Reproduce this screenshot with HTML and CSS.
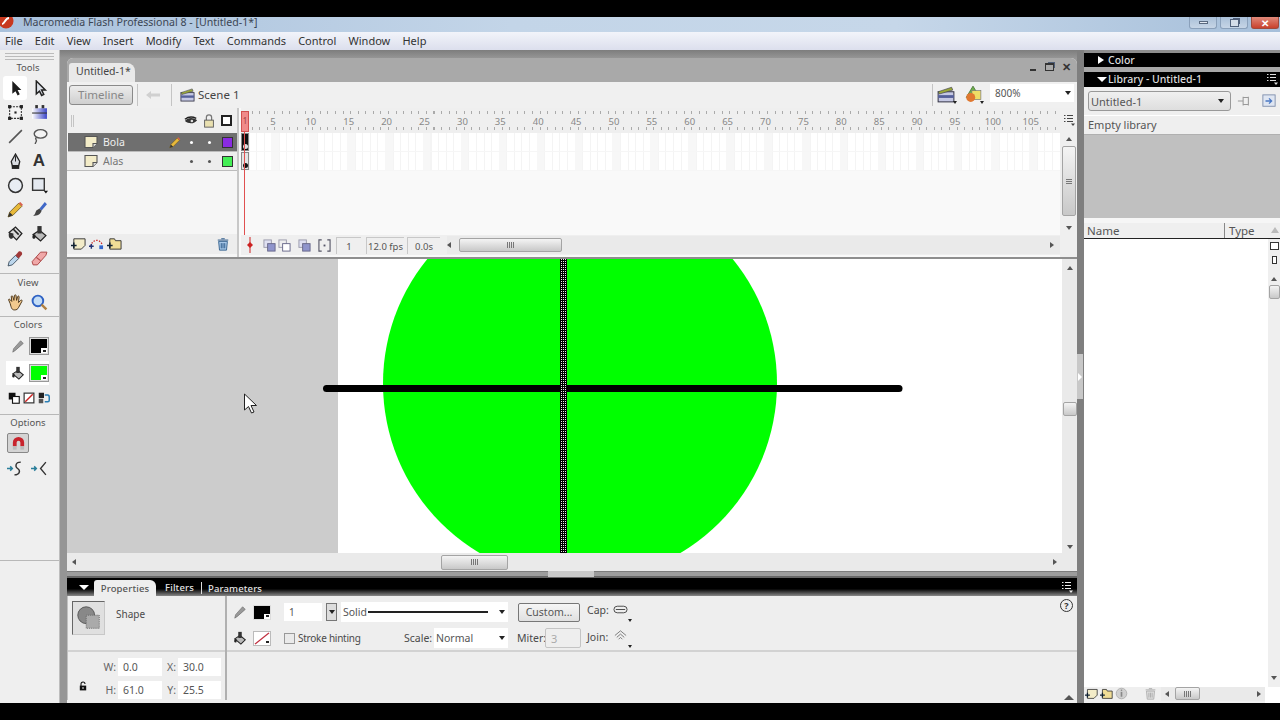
FILE: index.html
```html
<!DOCTYPE html>
<html lang="en">
<head>
    <meta charset="UTF-8">
    <title>Macromedia Flash Professional 8</title>
    <link rel="stylesheet" href="styles.css">
</head>
<body>
    <svg class="sprites" width="0" height="0">
        <defs>
            <linearGradient id="grad-blue" x1="0" y1="0" x2="1" y2="0"><stop offset="0" stop-color="#fff"/><stop offset="1" stop-color="#3c46c8"/></linearGradient>
            <pattern id="hatch" width="2" height="2" patternUnits="userSpaceOnUse">
                <rect width="2" height="2" fill="#000"/><rect width="1" height="1" fill="#eee"/>
            </pattern>
        </defs>
        <symbol id="i-arrow" viewBox="0 0 16 16"><path d="M5 1v12l3-2.500 2 4 2-1-2-4h3.500z" fill="#1c1c1c"/></symbol>
        <symbol id="i-subsel" viewBox="0 0 16 16"><path d="M5 1v12l3-2.500 2 4 2-1-2-4h3.500z" fill="#dfe3ea" stroke="#222" stroke-width="1.400"/></symbol>
        <symbol id="i-free" viewBox="0 0 16 16"><rect x="2.500" y="2.500" width="11" height="11" fill="#f4f4f4" stroke="#333" stroke-dasharray="2 1"/><rect x="1" y="1" width="3" height="3" fill="#222"/><rect x="12" y="1" width="3" height="3" fill="#222"/><rect x="1" y="12" width="3" height="3" fill="#222"/><rect x="12" y="12" width="3" height="3" fill="#222"/><rect x="7" y="7" width="2" height="2" fill="#222"/></symbol>
        <symbol id="i-gradient" viewBox="0 0 16 16"><rect x="1" y="4" width="14" height="10" fill="url(#grad-blue)"/><rect x="4" y="1" width="2.500" height="3" fill="#333"/><rect x="10" y="1" width="2.500" height="3" fill="#333"/><path d="M1 8.500h14" stroke="#333"/></symbol>
        <symbol id="i-line" viewBox="0 0 16 16"><path d="M2 14L14 2" stroke="#555" stroke-width="1.500"/></symbol>
        <symbol id="i-lasso" viewBox="0 0 16 16"><ellipse cx="9" cy="5.500" rx="6" ry="4" fill="#f3f3f3" stroke="#555" stroke-width="1.300"/><path d="M5 9c-2 2 1 2 0 3.500s-1 2-1 2.500" fill="none" stroke="#555" stroke-width="1.300"/></symbol>
        <symbol id="i-pen" viewBox="0 0 16 16"><path d="M8 1l4 7-1 4H5L4 8z" fill="#d8dbe0" stroke="#222" stroke-width="1.200"/><rect x="4.500" y="12" width="7" height="3" fill="#222"/><path d="M8 3v5" stroke="#222"/></symbol>
        <symbol id="i-oval" viewBox="0 0 16 16"><circle cx="8" cy="8" r="6.500" fill="#e8edf4" stroke="#333" stroke-width="1.400"/></symbol>
        <symbol id="i-rect" viewBox="0 0 16 16"><rect x="1.500" y="1.500" width="11" height="11" fill="#e4e9f0" stroke="#333" stroke-width="1.300"/><path d="M12 13h4l-2 2.500z" fill="#111"/></symbol>
        <symbol id="i-pencil" viewBox="0 0 16 16"><path d="M1 15l1.500-4.500L11 2l3 3-8.500 8.500z" fill="#e8b93a" stroke="#6d5a20" stroke-width=".8"/><path d="M11 2l3 3 1-1.500L12.500 1z" fill="#d8604c"/><path d="M1 15l1.500-4.500 3 3z" fill="#333"/></symbol>
        <symbol id="i-brush" viewBox="0 0 16 16"><path d="M8 7l5-6 2 2-5 6z" fill="#3f68c8"/><path d="M8 7l2 2c-1 4-4 5-8 5 2-1 2-3 3-5z" fill="#444"/></symbol>
        <symbol id="i-ink" viewBox="0 0 16 16"><path d="M2 7l6-5 6 6-5 6z" fill="#d9d9d9" stroke="#222" stroke-width="1.200"/><path d="M2 7c-1 3 0 6 2 6s2-3 2-5z" fill="#333"/><path d="M6 4l5 5" stroke="#222" stroke-width="1.500"/></symbol>
        <symbol id="i-bucket" viewBox="0 0 16 16"><path d="M2 9l6-4 6 5-5 5z" fill="#bbb" stroke="#222" stroke-width="1.200"/><rect x="6" y="1" width="4" height="7" fill="#333"/><path d="M2 9c-1 2-1 4 1 4s1-3 1-4z" fill="#222"/></symbol>
        <symbol id="i-dropper" viewBox="0 0 16 16"><path d="M1 15l1-4 6-6 3 3-6 6z" fill="#bcd6ec" stroke="#345" stroke-width=".8"/><path d="M8 5l3-3.500c2-1 4 1 3 3L11 8z" fill="#a03838"/></symbol>
        <symbol id="i-eraser" viewBox="0 0 16 16"><path d="M1 11l8-9h6l-1 3-8 9H2z" fill="#f0a8a8" stroke="#a44" stroke-width=".9"/><path d="M5 7l4 3" stroke="#a44"/></symbol>
        <symbol id="i-hand" viewBox="0 0 16 16"><path d="M3 9L1.500 5.500c0-1 1-1 1.500 0L4.500 7 4 2.500c0-1 1.300-1 1.500 0L6.500 6 7 1.500c.2-1 1.500-1 1.500 0L9 6l1-3.500c.3-1 1.500-.7 1.400.3L10.800 8l2-2c1-.8 1.800 0 1.200 1l-3 5.500c-1 2-2 2.500-4 2.500-2.500 0-3-2-4-6z" fill="#f2c98e" stroke="#4a3418" stroke-width=".9"/></symbol>
        <symbol id="i-zoom" viewBox="0 0 16 16"><circle cx="6.500" cy="6.500" r="5" fill="#c4ddf6" stroke="#2f62c4" stroke-width="1.800"/><path d="M10 10l4.500 4.500" stroke="#b08040" stroke-width="2.200"/></symbol>
        <symbol id="i-stroke" viewBox="0 0 16 16"><path d="M2 15l1-4 8-9 3 3-9 8z" fill="#999" stroke="#666" stroke-width=".7"/></symbol>
        <symbol id="i-swap" viewBox="0 0 16 16"><rect x="1" y="1" width="9" height="9" fill="#111"/><rect x="6" y="6" width="9" height="9" fill="#fff" stroke="#111" stroke-width="1.500"/></symbol>
        <symbol id="i-none" viewBox="0 0 16 16"><rect x="1.500" y="1.500" width="13" height="13" fill="#fff" stroke="#333" stroke-width="1.600"/><path d="M3 13L13 3" stroke="#c22" stroke-width="1.800"/></symbol>
        <symbol id="i-default" viewBox="0 0 16 16"><rect x="1" y="1" width="7" height="7" fill="#222"/><rect x="1" y="9" width="6" height="6" fill="#555"/><path d="M9 4h4c2 0 2 2 2 3v4c0 1-1 2-2 2H9" fill="none" stroke="#2a7eb4" stroke-width="2"/></symbol>
        <symbol id="i-magnet" viewBox="0 0 16 16"><path d="M2 11V7a6 6 0 0 1 12 0v4h-4V7a2 2 0 0 0-4 0v4z" fill="#c8232c"/><rect x="2" y="11" width="4" height="3.500" fill="#bbb"/><rect x="10" y="11" width="4" height="3.500" fill="#bbb"/></symbol>
        <symbol id="i-smooth" viewBox="0 0 16 16"><path d="M0 8h5M3 6l2 2-2 2" fill="none" stroke="#2a7e9a" stroke-width="1.400"/><path d="M13 2C7 2 8 7 10 8c3 2 2 6-3 6" fill="none" stroke="#333" stroke-width="1.300"/></symbol>
        <symbol id="i-straight" viewBox="0 0 16 16"><path d="M0 8h5M3 6l2 2-2 2" fill="none" stroke="#2a7e9a" stroke-width="1.400"/><path d="M14 2L9 8l5 6" fill="none" stroke="#333" stroke-width="1.300"/></symbol>
        <symbol id="i-back" viewBox="0 0 14 10"><path d="M0 5l5-4v2.500h9v3H5V9z" fill="#d0d0d0"/></symbol>
        <symbol id="i-scene" viewBox="0 0 16 16"><rect x="1" y="6" width="14" height="9" fill="#c5c8e4" stroke="#334" stroke-width=".9"/><rect x="1" y="9" width="14" height="2.500" fill="#55609a"/><path d="M1 6l12-4 1 2.500L2 8z" fill="#9aa838" stroke="#445" stroke-width=".6"/></symbol>
        <symbol id="i-symbols" viewBox="0 0 16 16"><path d="M8 1l6 10H2z" fill="#6fb04c" stroke="#3b6b2a" stroke-width=".7"/><rect x="7" y="5" width="8" height="8" fill="#eedd66" stroke="#777" stroke-width=".6"/><circle cx="6" cy="11" r="4" fill="#e07830"/></symbol>
        <symbol id="i-menu" viewBox="0 0 12 12"><path d="M1 1.500h1.500M4 1.500h6M1 4.500h1.500M4 4.500h6M1 7.500h1.500M4 7.500h6" stroke="currentColor" stroke-width="1.200"/><path d="M8 9.500h4L10 12z" fill="currentColor"/></symbol>
        <symbol id="i-eye" viewBox="0 0 16 16"><path d="M1 8c3-4 9-5 14-1-3 4-9 5-14 1z" fill="#333"/><path d="M1 6c4-3 9-3 13-1" fill="none" stroke="#222" stroke-width="1.500"/><circle cx="9" cy="8" r="1.500" fill="#ddd"/></symbol>
        <symbol id="i-lock" viewBox="0 0 16 16"><path d="M5 8V4a3 3 0 0 1 6 0v4" fill="none" stroke="#777" stroke-width="1.400"/><rect x="3" y="7" width="10" height="8" fill="#e9e0b0" stroke="#555" stroke-width="1"/></symbol>
        <symbol id="i-layer" viewBox="0 0 14 14"><path d="M1 1.500h12v7l-4 4H1z" fill="#f3ecc8" stroke="#555" stroke-width="1.100"/><path d="M13 8.500H9v4" fill="#ddd" stroke="#555" stroke-width="1.100"/></symbol>
        <symbol id="i-newlayer" viewBox="0 0 16 16"><path d="M3 3h12v7l-4 4H3z" fill="#f3ecc8" stroke="#333"/><path d="M0 10h6M3 7v6" stroke="#123" stroke-width="1.600"/></symbol>
        <symbol id="i-guide" viewBox="0 0 16 16"><path d="M2 11C3 4 11 2 14 9" fill="none" stroke="#c22" stroke-dasharray="1.500 1.500" stroke-width="1.400"/><path d="M0 11h5M2.500 8.500v5" stroke="#237" stroke-width="1.500"/><rect x="11" y="10" width="4" height="4" fill="#36c"/></symbol>
        <symbol id="i-folder" viewBox="0 0 16 16"><path d="M3 3h5l1 2h6v9H3z" fill="#f0dd96" stroke="#333"/><path d="M0 10h6M3 7v6" stroke="#123" stroke-width="1.600"/></symbol>
        <symbol id="i-trash" viewBox="0 0 16 16"><path d="M3 5h10l-1 10H4z" fill="#a8c8e8" stroke="#2c5a88"/><path d="M2 3.500h12M6 2h4M6 7v6M8 7v6M10 7v6" stroke="#2c5a88" stroke-width="1.100"/></symbol>
        <symbol id="i-trash-off" viewBox="0 0 16 16"><path d="M3 5h10l-1 10H4z" fill="#ddd" stroke="#aaa"/><path d="M2 3.500h12M6 2h4M6 7v6M8 7v6M10 7v6" stroke="#aaa" stroke-width="1.100"/></symbol>
        <symbol id="i-center" viewBox="0 0 14 16"><path d="M7 0v16" stroke="#c22"/><path d="M4 8l3-3 3 3-3 3z" fill="#c22"/></symbol>
        <symbol id="i-onion" viewBox="0 0 14 14"><rect x="1" y="1" width="8" height="8" fill="#dfe0f2" stroke="#99a"/><rect x="5" y="5" width="8" height="8" fill="#8f94cc" stroke="#668"/></symbol>
        <symbol id="i-onion-out" viewBox="0 0 14 14"><rect x="1" y="1" width="8" height="8" fill="#eee" stroke="#99a"/><rect x="5" y="5" width="8" height="8" fill="#fff" stroke="#668"/></symbol>
        <symbol id="i-brackets" viewBox="0 0 14 14"><path d="M4 1H1v12h3M10 1h3v12h-3" fill="none" stroke="#556" stroke-width="1.200"/><rect x="6" y="6" width="2" height="2" fill="#556"/></symbol>
        <symbol id="i-pin" viewBox="0 0 16 16"><path d="M1 8h6M7 3v10M7 4h6v8H7M13 3v10" fill="none" stroke="#999" stroke-width="1.200"/></symbol>
        <symbol id="i-libnew" viewBox="0 0 16 16"><rect x="1" y="1" width="14" height="13" fill="#dfe6f2" stroke="#7a8aa8"/><path d="M4 8h7M8 5l3 3-3 3" fill="none" stroke="#4a78c4" stroke-width="1.500"/></symbol>
        <symbol id="i-info" viewBox="0 0 16 16"><circle cx="8" cy="8" r="6.500" fill="#d0d0d0" stroke="#aaa"/><path d="M8 6v6" stroke="#888" stroke-width="2"/><circle cx="8" cy="4" r="1" fill="#888"/></symbol>
        <symbol id="i-shape" viewBox="0 0 30 30"><circle cx="12" cy="12" r="9" fill="#888" stroke="#555"/><rect x="12" y="12" width="14" height="14" fill="#aaa" stroke="#666" stroke-dasharray="1 1"/></symbol>
        <symbol id="i-cap" viewBox="0 0 16 16"><rect x="1" y="4.500" width="14" height="7" rx="3.500" fill="none" stroke="#444"/><path d="M3 8h10" stroke="#444"/></symbol>
        <symbol id="i-join" viewBox="0 0 16 16"><path d="M2 8l6-5 6 5M4 10l4-3.500 4 3.500M6 12l2-2 2 2" fill="none" stroke="#777"/></symbol>
        <symbol id="i-padlock" viewBox="0 0 10 12"><path d="M2.500 6V3.500a2.500 2.500 0 0 1 5 0" fill="none" stroke="#111" stroke-width="1.300"/><rect x="1" y="5.500" width="8" height="6" fill="#111"/><rect x="4.300" y="7.500" width="1.400" height="2" fill="#fff"/></symbol>
    </svg>

    <div class="letterbox top"></div>

    <header class="titlebar">
        <svg class="app-logo" viewBox="0 4 16 12"><circle cx="7" cy="8" r="7.500" fill="#c8381e"/><path d="M3 11c3 0 3-6 7-6" fill="none" stroke="#fff" stroke-width="2"/></svg>
        <span class="app-title">Macromedia Flash Professional 8 - [Untitled-1*]</span>
        <div class="win-buttons">
            <span class="win-btn"><i class="glyph-min"></i></span>
            <span class="win-btn"><i class="glyph-restore"></i></span>
            <span class="win-btn close"><i class="glyph-close">✕</i></span>
        </div>
    </header>

    <nav class="menubar">
        <span>File</span><span>Edit</span><span>View</span><span>Insert</span><span>Modify</span><span>Text</span><span>Commands</span><span>Control</span><span>Window</span><span>Help</span>
    </nav>

    <main class="workspace">
        <aside class="tools">
            <div class="grip-h"></div>
            <div class="tools-label">Tools</div>
            <div class="tool-grid">
                <span class="tool active"><svg><use href="#i-arrow"/></svg></span>
                <span class="tool"><svg><use href="#i-subsel"/></svg></span>
                <span class="tool"><svg><use href="#i-free"/></svg></span>
                <span class="tool"><svg><use href="#i-gradient"/></svg></span>
                <span class="tool"><svg><use href="#i-line"/></svg></span>
                <span class="tool"><svg><use href="#i-lasso"/></svg></span>
                <span class="tool"><svg><use href="#i-pen"/></svg></span>
                <span class="tool text-tool">A</span>
                <span class="tool"><svg><use href="#i-oval"/></svg></span>
                <span class="tool"><svg><use href="#i-rect"/></svg></span>
                <span class="tool"><svg><use href="#i-pencil"/></svg></span>
                <span class="tool"><svg><use href="#i-brush"/></svg></span>
                <span class="tool"><svg><use href="#i-ink"/></svg></span>
                <span class="tool"><svg><use href="#i-bucket"/></svg></span>
                <span class="tool"><svg><use href="#i-dropper"/></svg></span>
                <span class="tool"><svg><use href="#i-eraser"/></svg></span>
            </div>
            <div class="tools-section view-section">
                <div class="tools-label">View</div>
                <div class="tool-grid">
                    <span class="tool"><svg><use href="#i-hand"/></svg></span>
                    <span class="tool"><svg><use href="#i-zoom"/></svg></span>
                </div>
            </div>
            <div class="tools-section colors-section">
                <div class="tools-label">Colors</div>
                <div class="color-row stroke-color">
                    <svg class="color-icon"><use href="#i-stroke"/></svg>
                    <span class="swatch big black"></span>
                </div>
                <div class="color-row fill-color">
                    <svg class="color-icon"><use href="#i-bucket"/></svg>
                    <span class="swatch big green"></span>
                </div>
                <div class="color-actions">
                    <svg><use href="#i-swap"/></svg>
                    <svg><use href="#i-none"/></svg>
                    <svg><use href="#i-default"/></svg>
                </div>
            </div>
            <div class="tools-section options-section">
                <div class="tools-label">Options</div>
                <span class="magnet"><svg><use href="#i-magnet"/></svg></span>
                <div class="tool-grid">
                    <span class="tool"><svg><use href="#i-smooth"/></svg></span>
                    <span class="tool"><svg><use href="#i-straight"/></svg></span>
                </div>
            </div>
            <div class="tools-end"></div>
        </aside>

        <section class="center">
            <div class="doc">
                <div class="doc-tabs">
                    <span class="doc-tab">Untitled-1*</span>
                    <div class="doc-controls">
                        <i class="glyph-min dark"></i>
                        <i class="glyph-restore dark"></i>
                        <i class="glyph-close dark">✕</i>
                    </div>
                </div>

                <div class="edit-bar">
                    <button class="timeline-btn">Timeline</button>
                    <span class="vsep"></span>
                    <span class="back-arrow"><svg><use href="#i-back"/></svg></span>
                    <span class="vsep"></span>
                    <svg class="scene-icon"><use href="#i-scene"/></svg>
                    <span class="scene-name">Scene 1</span>
                    <span class="vsep push"></span>
                    <span class="edit-icon"><svg><use href="#i-scene"/></svg><b class="caret tiny"></b></span>
                    <span class="edit-icon second"><svg><use href="#i-symbols"/></svg><b class="caret tiny"></b></span>
                    <div class="zoom-combo">800%<b class="caret"></b></div>
                </div>

                <div class="timeline">
                    <div class="layer-col">
                        <div class="layer-head">
                            <span class="layer-grip"></span>
                            <svg class="head-icon eye"><use href="#i-eye"/></svg>
                            <svg class="head-icon lock"><use href="#i-lock"/></svg>
                            <span class="head-square"></span>
                        </div>
                        <div class="layer selected">
                            <svg class="layer-icon"><use href="#i-layer"/></svg>
                            <span class="layer-name">Bola</span>
                            <svg class="layer-pencil"><use href="#i-pencil"/></svg>
                            <span class="dot"></span><span class="dot"></span>
                            <span class="outline purple"></span>
                        </div>
                        <div class="layer">
                            <svg class="layer-icon"><use href="#i-layer"/></svg>
                            <span class="layer-name">Alas</span>
                            <span class="layer-pencil"></span>
                            <span class="dot"></span><span class="dot"></span>
                            <span class="outline lime"></span>
                        </div>
                        <div class="layer-foot">
                            <svg><use href="#i-newlayer"/></svg>
                            <svg><use href="#i-guide"/></svg>
                            <svg><use href="#i-folder"/></svg>
                            <svg class="foot-trash"><use href="#i-trash"/></svg>
                        </div>
                    </div>

                    <div class="frame-col">
                        <div class="ruler">
                            <span>5</span><span>10</span><span>15</span><span>20</span><span>25</span><span>30</span><span>35</span>
                            <span>40</span><span>45</span><span>50</span><span>55</span><span>60</span><span>65</span><span>70</span>
                            <span>75</span><span>80</span><span>85</span><span>90</span><span>95</span><span>100</span><span>105</span>
                        </div>
                        <div class="frame-row first"><span class="keyframe black"></span></div>
                        <div class="frame-row"><span class="keyframe"></span></div>
                        <div class="frame-foot">
                            <svg class="foot-center"><use href="#i-center"/></svg>
                            <svg class="foot-onion"><use href="#i-onion"/></svg>
                            <svg class="foot-onion"><use href="#i-onion-out"/></svg>
                            <svg class="foot-onion gap"><use href="#i-onion"/></svg>
                            <svg class="foot-onion gap"><use href="#i-brackets"/></svg>
                            <span class="status frame-no">1</span>
                            <span class="status fps">12.0 fps</span>
                            <span class="status secs">0.0s</span>
                            <div class="hscroll foot-scroll">
                                <span class="arr left"></span>
                                <span class="thumb tl-thumb"><em></em></span>
                                <span class="arr right"></span>
                            </div>
                        </div>
                        <span class="playhead">1</span>
                        <span class="playline"></span>
                    </div>

                    <div class="tl-side">
                        <svg class="tl-menu"><use href="#i-menu"/></svg>
                        <div class="vscroll">
                            <span class="arr up"></span>
                            <span class="thumb tl-vthumb"><em></em></span>
                            <span class="arr down"></span>
                        </div>
                    </div>
                </div>

                <div class="canvas-row">
                    <svg class="canvas" width="995" height="294" viewBox="0 0 995 294">
                        <rect width="995" height="294" fill="#cccccc"/>
                        <rect x="271" width="724" height="294" fill="#fff"/>
                        <circle cx="513" cy="124.500" r="197" fill="#00ff00"/>
                        <line x1="259.500" y1="129.500" x2="832" y2="129.500" stroke="#000" stroke-width="7" stroke-linecap="round"/>
                        <rect x="493" width="7" height="294" fill="url(#hatch)"/>
                        <path d="M177.500 135v16l4-3.500 3 6.500 2.500-1-3-6.500h5.500z" fill="#fff" stroke="#222"/>
                    </svg>
                    <div class="vscroll stage-vscroll">
                        <span class="arr up"></span>
                        <span class="thumb stage-vthumb"></span>
                        <span class="arr down"></span>
                    </div>
                </div>
                <div class="hscroll stage-hscroll">
                    <span class="arr left"></span>
                    <span class="thumb stage-hthumb"><em></em></span>
                    <span class="arr right"></span>
                </div>
            </div>

            <div class="split-h"><span class="split-handle"></span></div>

            <div class="props">
                <div class="props-head">
                    <span class="tri-down white"></span>
                    <span class="props-tab">Properties</span>
                    <span class="props-link filters">Filters</span>
                    <span class="props-link params">Parameters</span>
                    <svg class="props-menu"><use href="#i-menu"/></svg>
                </div>
                <div class="props-body">
                    <div class="props-left">
                        <div class="shape-info">
                            <span class="shape-thumb"><svg><use href="#i-shape"/></svg></span>
                            <span class="shape-name">Shape</span>
                        </div>
                        <div class="metrics">
                            <svg class="padlock"><use href="#i-padlock"/></svg>
                            <div class="metric-grid">
                                <label>W:</label><span class="field">0.0</span><label>X:</label><span class="field">30.0</span>
                                <label>H:</label><span class="field">61.0</span><label>Y:</label><span class="field">25.5</span>
                            </div>
                        </div>
                    </div>
                    <div class="props-right">
                        <div class="stroke-rows">
                            <div class="prop-row">
                                <svg class="prop-icon"><use href="#i-stroke"/></svg>
                                <span class="swatch small black"></span>
                                <span class="field stroke-w">1</span>
                                <span class="mini-drop"><b class="caret"></b></span>
                                <span class="field solid">Solid<i class="solid-line"></i><b class="caret"></b></span>
                                <button class="custom-btn">Custom...</button>
                                <label class="cap-label">Cap:</label>
                                <span class="cap-icon"><svg><use href="#i-cap"/></svg><b class="caret tiny"></b></span>
                            </div>
                            <div class="prop-row second">
                                <svg class="prop-icon"><use href="#i-bucket"/></svg>
                                <span class="swatch small none"><svg viewBox="0 0 16 16" preserveAspectRatio="none"><path d="M1 15L15 1" stroke="#c03040" stroke-width="1.500"/></svg></span>
                                <span class="checkbox"></span>
                                <label class="hint-label">Stroke hinting</label>
                                <label class="scale-label">Scale:</label>
                                <span class="field scale">Normal<b class="caret"></b></span>
                                <label class="miter-label">Miter:</label>
                                <span class="field miter">3</span>
                                <label class="join-label">Join:</label>
                                <span class="cap-icon"><svg><use href="#i-join"/></svg><b class="caret tiny"></b></span>
                            </div>
                        </div>
                        <span class="help">?</span>
                        <div class="props-lower"><span class="collapse-tri"></span></div>
                    </div>
                </div>
            </div>
        </section>

        <div class="split-v"><span class="split-handle-v"></span></div>

        <aside class="side">
            <div class="panel-head color-head"><span class="tri-right"></span>Color</div>
            <div class="panel-head lib-head"><span class="tri-down small-tri"></span>Library - Untitled-1<svg class="lib-menu"><use href="#i-menu"/></svg></div>
            <div class="lib-bar">
                <div class="lib-combo">Untitled-1<b class="caret"></b></div>
                <svg class="lib-pin"><use href="#i-pin"/></svg>
                <svg class="lib-new"><use href="#i-libnew"/></svg>
            </div>
            <div class="lib-count">Empty library</div>
            <div class="lib-preview"></div>
            <div class="lib-columns">
                <span class="col-name">Name</span>
                <span class="col-type">Type</span>
                <span class="col-sort"></span>
            </div>
            <div class="lib-list">
                <div class="lib-rows"></div>
                <div class="lib-scroll">
                    <span class="view-btn wide"></span>
                    <span class="view-btn narrow"></span>
                    <span class="arr up"></span>
                    <span class="thumb lib-thumb"></span>
                    <span class="arr down"></span>
                </div>
            </div>
            <div class="lib-foot">
                <svg><use href="#i-newlayer"/></svg>
                <svg><use href="#i-folder"/></svg>
                <svg><use href="#i-info"/></svg>
                <svg class="lib-trash"><use href="#i-trash-off"/></svg>
                <div class="hscroll lib-hscroll">
                    <span class="arr left"></span>
                    <span class="thumb lib-hthumb"><em></em></span>
                    <span class="arr right"></span>
                </div>
                <span class="lib-corner"></span>
            </div>
        </aside>
    </main>

    <div class="letterbox bottom"></div>
</body>
</html>
```

FILE: styles.css
```css
* {
    box-sizing: border-box;
}

body {
    margin: 0;
    width: 1280px;
    height: 720px;
    overflow: hidden;
    background-color: #000;
    font-family: "Noto Sans", sans-serif;
    font-size: 11px;
    color: #4a4a4a;
}

i, em {
    font-style: normal;
}

label {
    display: block;
}

.sprites {
    position: absolute;
}

.letterbox.top {
    height: 17px;
    background-color: #000;
}

.letterbox.bottom {
    height: 17px;
    background-color: #000;
}

/* window chrome */
.titlebar {
    height: 15px;
    display: flex;
    align-items: flex-start;
    background: linear-gradient(to right, #a9c1dc, #c3d5e8 40%, #c6d7e9 70%, #a6bfda);
}

.app-logo {
    width: 16px;
    height: 12px;
    margin-left: -1px;
    flex-shrink: 0;
}

.app-title {
    margin-left: 8px;
    color: #3c4654;
    font-size: 10.600px;
    line-height: 10px;
}

.win-buttons {
    margin-left: auto;
    display: flex;
    gap: 3px;
    margin-right: 1px;
}

.win-btn {
    width: 28px;
    height: 12px;
    border: 1px solid #8aa0ba;
    border-top: none;
    border-radius: 0 0 3px 3px;
    background: linear-gradient(#aac0d8, #c6d5e6);
    display: flex;
    align-items: center;
    justify-content: center;
}

.win-btn.close {
    background: linear-gradient(#e0897a, #c9412c);
    border-color: #a04a3c;
}

.glyph-min {
    display: block;
    width: 9px;
    height: 3px;
    background-color: #e4eaf2;
    border: 1px solid #5a6a80;
}

.glyph-restore {
    display: block;
    width: 9px;
    height: 8px;
    border: 1px solid #50607a;
    background-color: #d4dde8;
    box-shadow: 2px -2px 0 -1px #50607a;
}

.glyph-close {
    color: #fff;
    font-size: 10px;
    line-height: 10px;
    font-weight: bold;
}

.menubar {
    height: 18px;
    display: flex;
    align-items: center;
    gap: 12.200px;
    padding: 0 0 2px 5px;
    background: linear-gradient(#f2f4fa, #dcdfed);
    color: #333;
    font-size: 11px;
}

.workspace {
    height: 653px;
    display: flex;
    background: linear-gradient(#7d7d7d, #959595 8px);
}

/* tools */
.tools {
    width: 60px;
    background-color: #efefef;
    border-right: 1px solid #bdbdbd;
    flex-shrink: 0;
    display: flex;
    flex-direction: column;
}

.grip-h {
    height: 7px;
    margin: 3px 5px 0;
    background: repeating-linear-gradient(to bottom, #bbb 0 1px, transparent 1px 3px);
}

.tools-label {
    height: 16px;
    text-align: center;
    font-size: 9.500px;
    line-height: 16px;
    color: #555;
    padding-right: 3px;
}

.tool-grid {
    display: grid;
    grid-template-columns: 24px 24px;
    grid-auto-rows: 24.300px;
    padding-left: 3px;
}

.tool {
    display: flex;
    align-items: center;
    justify-content: center;
}

.tool svg {
    width: 17px;
    height: 17px;
}

.tool.active {
    background-color: #fff;
    border-radius: 3px;
}

.text-tool {
    font-family: "Liberation Sans", sans-serif;
    font-weight: bold;
    font-size: 17px;
    color: #333;
}

.tools-section {
    border-top: 1px solid #b8b8b8;
}

.view-section {
    margin-top: 3px;
    height: 43px;
    padding-top: 1px;
}

.view-section .tool-grid {
    margin-top: -1px;
}

.colors-section {
    height: 98px;
}

.color-row {
    display: flex;
    align-items: center;
    gap: 5px;
    padding-left: 11px;
}

.stroke-color {
    height: 24px;
    margin-top: 1px;
}

.color-icon {
    width: 14px;
    height: 14px;
}

.fill-color {
    height: 24px;
    margin: 3px 10px 0 6px;
    padding-left: 5px;
    background-color: #fff;
}

.color-actions {
    display: flex;
    gap: 3px;
    padding: 7px 0 0 8px;
}

.color-actions svg {
    width: 12px;
    height: 12px;
}

.swatch {
    display: block;
    border: 1px solid #bbb;
    position: relative;
}

.swatch.big {
    width: 18px;
    height: 16px;
    border: 1px solid #ddd;
    outline: 1px solid #999;
}

.swatch.black {
    background-color: #000;
}

.swatch.green {
    background-color: #00ff00;
}

.swatch.big::after, .swatch.small::after {
    content: "";
    position: absolute;
    right: 0;
    bottom: 0;
    width: 6px;
    height: 5px;
    background: linear-gradient(#222, #222) center / 3px 2px no-repeat #fff;
}

.options-section {
    height: 146px;
}

.magnet {
    display: flex;
    align-items: center;
    justify-content: center;
    width: 22px;
    height: 20px;
    margin: 2px 0 3px 7px;
    background-color: #d4d4d4;
    border: 1px solid #888;
    border-radius: 2px;
}

.magnet svg {
    width: 15px;
    height: 15px;
}

.tools-end {
    border-top: 1px solid #b8b8b8;
    flex: 1;
}

/* center column */
.center {
    width: 1010px;
    margin-left: 7px;
    padding-top: 8px;
    flex-shrink: 0;
}

.doc {
    height: 513px;
    border-radius: 6px 6px 0 0;
    overflow: hidden;
    background-color: #efefef;
}

.doc-tabs {
    height: 24px;
    display: flex;
    align-items: flex-end;
    padding-left: 2px;
    background-color: #a9a9a9;
}

.doc-tab {
    width: 66px;
    height: 19px;
    line-height: 16px;
    padding-left: 7px;
    background-color: #e9e9e9;
    border-radius: 3px 8px 0 0;
    color: #444;
    font-size: 10.500px;
}

.doc-controls {
    margin-left: auto;
    align-self: center;
    display: flex;
    align-items: center;
    gap: 8px;
    padding: 0 6px 6px 0;
}

.glyph-min.dark {
    width: 6px;
    height: 2px;
    margin: 6px 1px 0 0;
    background-color: #333;
    border: none;
}

.glyph-restore.dark {
    background: none;
    border-color: #333;
    border-top-width: 2px;
}

.glyph-close.dark {
    color: #333;
    font-size: 11px;
}

.edit-bar {
    height: 26px;
    display: flex;
    align-items: center;
    padding-left: 2px;
    background-color: #f0f0f0;
}

.timeline-btn {
    width: 64px;
    height: 20px;
    padding: 0 0 2px;
    font: inherit;
    font-size: 11.500px;
    color: #888;
    background: linear-gradient(#ececec, #cfcfcf);
    border: 1px solid #8a8a8a;
    border-radius: 3px;
}

.vsep {
    width: 1px;
    height: 22px;
    background-color: #c4c4c4;
    margin-left: 4px;
}

.back-arrow {
    width: 29px;
    height: 10px;
    display: flex;
    justify-content: center;
}

.back-arrow svg {
    width: 14px;
    height: 10px;
}

.scene-icon {
    width: 15px;
    height: 15px;
    margin: 0 0 2px 8px;
}

.scene-name {
    margin: 0 0 2px 3px;
    font-size: 11.500px;
    color: #444;
}

.vsep.push {
    margin-left: auto;
}

.edit-icon {
    width: 20px;
    height: 20px;
    margin-left: 4px;
    position: relative;
}

.edit-icon svg {
    width: 18px;
    height: 18px;
    display: block;
}

.edit-icon .caret {
    position: absolute;
    right: 0;
    bottom: 1px;
}

.edit-icon.second {
    margin-left: 7px;
}

.zoom-combo {
    width: 84px;
    height: 18px;
    margin: -4px 3px 0 6px;
    padding-left: 5px;
    background-color: #fff;
    font-size: 10px;
    line-height: 16px;
    color: #555;
    display: flex;
    align-items: center;
    justify-content: space-between;
    padding-right: 3px;
}

.caret {
    display: inline-block;
    width: 0;
    height: 0;
    border: 3.500px solid transparent;
    border-top: 4px solid #222;
    border-bottom: none;
    flex-shrink: 0;
}

.caret.tiny {
    border-width: 3px 2px 0;
    border-color: #222 transparent transparent;
}

/* timeline */
.timeline {
    height: 151px;
    display: flex;
    border-bottom: 2px solid #8e8e8e;
}

.layer-col {
    width: 170px;
    display: flex;
    flex-direction: column;
    background-color: #f6f6f6;
}

.layer-head {
    height: 25px;
    display: flex;
    align-items: center;
    background-color: #efefef;
}

.layer-grip {
    width: 3px;
    height: 12px;
    margin-left: 4px;
    border-left: 1px solid #c4c4c4;
    border-right: 1px solid #c4c4c4;
}

.head-icon {
    width: 14px;
    height: 14px;
}

.head-icon.eye {
    margin-left: 110px;
}

.head-icon.lock {
    margin-left: 4px;
}

.head-square {
    width: 11px;
    height: 11px;
    margin-left: 5px;
    border: 2px solid #222;
    background-color: #fff;
}

.layer {
    height: 19px;
    display: flex;
    align-items: center;
    border-bottom: 1px solid #bcbcbc;
    background-color: #ededed;
    color: #777;
    font-size: 10.500px;
}

.layer.selected {
    background-color: #6f6f6f;
    color: #f0f0f0;
    margin-left: 1px;
}

.layer-icon {
    width: 14px;
    height: 14px;
    margin-left: 17px;
    flex-shrink: 0;
}

.layer.selected .layer-icon {
    margin-left: 16px;
}

.layer-name {
    width: 63px;
    margin-left: 5px;
}

.layer-pencil {
    width: 12px;
    height: 15px;
    margin-left: 3px;
}

.dot {
    width: 3px;
    height: 3px;
    border-radius: 50%;
    background-color: #555;
    margin-left: 9px;
}

.dot + .dot {
    margin-left: 15px;
}

.layer.selected .dot {
    background-color: #fff;
}

.outline {
    width: 11px;
    height: 11px;
    margin-left: 11px;
    border: 1px solid #333;
}

.outline.purple {
    background-color: #8a2be2;
}

.outline.lime {
    background-color: #44ee55;
}

.layer-foot {
    margin-top: auto;
    height: 20px;
    display: flex;
    align-items: center;
    padding: 0 0 1px 4px;
    gap: 3px;
    background-color: #ededed;
    margin-bottom: 3px;
}

.layer-foot svg {
    width: 15px;
    height: 15px;
}

.layer-foot .foot-trash {
    margin-left: auto;
    margin-right: 7px;
    width: 14px;
    height: 14px;
}

.frame-col {
    width: 823px;
    padding-left: 2px;
    border-left: 2px solid #c8c8c8;
    position: relative;
    display: flex;
    flex-direction: column;
    background-color: #f9f9f9;
}

.ruler {
    height: 25px;
    display: grid;
    grid-template-columns: repeat(21, 37.900px);
    padding: 1px 0 0 13px;
    align-items: center;
    text-align: center;
    font-size: 9.500px;
    color: #888;
    background-color: #efefef;
    background-image:
        repeating-linear-gradient(to right, #aaa 0 1px, transparent 1px 7.580px),
        repeating-linear-gradient(to right, #aaa 0 1px, transparent 1px 7.580px);
    background-size: 100% 3px, 100% 3px;
    background-position: 3px 3px, 3px 19px;
    background-repeat: no-repeat;
}

.frame-row {
    height: 19px;
    border-bottom: 1px solid #f6f6f6;
    background-color: #fff;
    background-image:
        repeating-linear-gradient(to right, transparent 0 30.300px, #f7f7f7 30.300px 37.900px),
        repeating-linear-gradient(to right, #f4f4f4 0 1px, transparent 1px 7.580px);
}

.keyframe {
    display: block;
    width: 8px;
    height: 18px;
    background-color: #e4e4e4;
    border: 1px solid #888;
    position: relative;
}

.keyframe.black {
    background-color: #111;
}

.keyframe::after {
    content: "";
    position: absolute;
    left: .5px;
    bottom: 1px;
    width: 5px;
    height: 5px;
    border-radius: 50%;
    background-color: #111;
}

.keyframe.black::after {
    background-color: #ddd;
}

.frame-foot {
    margin-top: auto;
    margin-bottom: 2px;
    height: 20px;
    display: flex;
    align-items: center;
    background-color: #efefef;
}

.foot-center {
    width: 14px;
    height: 16px;
    margin-left: 2px;
}

.foot-onion {
    width: 13px;
    height: 13px;
    margin-left: 2px;
}

.foot-center + .foot-onion {
    margin-left: 6px;
}

.foot-onion.gap {
    margin-left: 7px;
}

.status {
    height: 17px;
    line-height: 17px;
    font-size: 9.500px;
    border-top: 1px solid #c8c8c8;
    border-left: 1px solid #c8c8c8;
    text-align: center;
    color: #555;
}

.frame-no {
    width: 25px;
    margin-left: 5px;
}

.fps {
    width: 38px;
    margin-left: 5px;
}

.secs {
    width: 33px;
    margin-left: 3px;
}

.hscroll {
    display: flex;
    align-items: center;
    background-color: #eaeaea;
}

.foot-scroll {
    flex: 1;
    margin-left: 7px;
    height: 18px;
    padding-right: 6px;
}

.arr {
    display: block;
    width: 0;
    height: 0;
    border: 3px solid transparent;
    flex-shrink: 0;
}

.arr.left {
    border-right: 4px solid #555;
    border-left: none;
}

.arr.right {
    border-left: 4px solid #555;
    border-right: none;
    margin-left: auto;
}

.arr.up {
    border-bottom: 4px solid #555;
    border-top: none;
}

.arr.down {
    border-top: 4px solid #555;
    border-bottom: none;
    margin-top: auto;
}

.thumb {
    display: flex;
    align-items: center;
    justify-content: center;
    background: linear-gradient(#f4f4f4, #c8c8c8);
    border: 1px solid #a4a4a4;
    border-radius: 2px;
}

.thumb em {
    display: block;
    width: 7px;
    height: 6px;
    background: repeating-linear-gradient(to right, #777 0 1px, transparent 1px 2px);
}

.tl-thumb {
    width: 103px;
    height: 14px;
    margin-left: 8px;
}

.playhead {
    position: absolute;
    left: 2px;
    top: 3px;
    width: 8px;
    height: 21px;
    background-color: #f08a8a;
    border: 1px solid #d05050;
    font-size: 8px;
    line-height: 17px;
    text-align: center;
    color: #a04040;
}

.playline {
    position: absolute;
    left: 5px;
    top: 24px;
    width: 1px;
    height: 103px;
    background-color: #e05050;
}

.tl-side {
    width: 17px;
    display: flex;
    flex-direction: column;
    align-items: center;
    background-color: #efefef;
}

.tl-menu {
    width: 12px;
    height: 12px;
    margin-top: 6px;
    color: #444;
    flex-shrink: 0;
}

.vscroll {
    display: flex;
    flex-direction: column;
    align-items: center;
}

.tl-side .vscroll {
    height: 103px;
    margin-top: 6px;
    padding: 5px 0;
}

.tl-vthumb {
    width: 14px;
    height: 70px;
    margin-top: 5px;
}

.tl-vthumb em {
    width: 6px;
    height: 5px;
    background: repeating-linear-gradient(to bottom, #777 0 1px, transparent 1px 2px);
}

/* stage */
.canvas-row {
    height: 294px;
    display: flex;
}

.canvas {
    display: block;
    flex-shrink: 0;
}

.stage-vscroll {
    width: 15px;
    padding: 7px 0 4px;
    background-color: #eaeaea;
}

.stage-vthumb {
    width: 14px;
    height: 14px;
    margin-top: 132px;
}

.stage-hscroll {
    height: 18px;
    padding: 0 20px 0 5px;
}

.stage-hthumb {
    width: 67px;
    height: 15px;
    margin-left: 365px;
}

.split-h {
    height: 7px;
    background: linear-gradient(#7c7c7c 0 1px, #9c9c9c 1px 5px, #666 5px);
    display: flex;
    justify-content: center;
}

.split-handle {
    width: 46px;
    height: 6px;
    margin-right: 2px;
    background-color: #c8c8c8;
}

/* properties */
.props {
    height: 125px;
    background-color: #eeeeee;
}

.props-head {
    height: 18px;
    display: flex;
    align-items: center;
    background: linear-gradient(#000 0 60%, #888);
    color: #e4e4e4;
    font-weight: 500;
    font-size: 9.500px;
    letter-spacing: .15px;
}

.tri-down {
    display: block;
    width: 0;
    height: 0;
    border: 5px solid transparent;
    border-top: 5px solid #fff;
    border-bottom: none;
    margin-left: 12px;
}

.props-tab {
    width: 62px;
    height: 16px;
    margin: 2px 0 0 5px;
    line-height: 17px;
    text-align: center;
    background-color: #eee;
    color: #555;
    border-radius: 3px 6px 0 0;
}

.props-link {
    margin-top: 2px;
}

.props-link.filters {
    margin-left: 9px;
    padding-right: 7px;
    border-right: 1px solid #ddd;
    line-height: 12px;
}

.props-link.params {
    margin-left: 6px;
}

.props-menu {
    width: 12px;
    height: 12px;
    margin-left: auto;
    margin-right: 4px;
    color: #eee;
}

.props-body {
    height: 107px;
    display: flex;
}

.props-left {
    width: 160px;
    border-right: 2px solid #b0b0b0;
    margin-bottom: 3px;
    border-left: 1px solid #c0c0c0;
}

.shape-info {
    height: 56px;
    display: flex;
    padding: 5px 0 0 4px;
    border-bottom: 2px solid #d2d2d2;
}

.shape-thumb {
    width: 33px;
    height: 34px;
    border: 1px solid #c8c8c8;
    border-top-color: #666;
    border-left-color: #666;
    background-color: #e0e0e0;
}

.shape-thumb svg {
    width: 28px;
    height: 28px;
    margin: 2px;
}

.shape-name {
    margin: 6px 0 0 11px;
    font-size: 10px;
}

.metrics {
    display: flex;
    padding-top: 4px;
}

.padlock {
    width: 8px;
    height: 10px;
    margin: 25px 0 0 11px;
}

.metric-grid {
    display: grid;
    grid-template-columns: 17px 44px 16px 43px;
    grid-auto-rows: 22.500px;
    margin-left: 14px;
    align-items: center;
    font-size: 10.500px;
}

.metric-grid label {
    text-align: right;
    padding-right: 2px;
    color: #666;
}

.field {
    display: flex;
    align-items: center;
    height: 18px;
    padding-left: 5px;
    background-color: #fff;
    color: #555;
}

.props-right {
    flex: 1;
    position: relative;
}

.stroke-rows {
    height: 56px;
    padding: 6px 0 0 6px;
    border-bottom: 2px solid #d2d2d2;
}

.prop-row {
    display: flex;
    align-items: center;
    height: 20px;
}

.prop-row.second {
    margin-top: 6px;
}

.prop-icon {
    width: 14px;
    height: 14px;
    flex-shrink: 0;
}

.swatch.small {
    width: 18px;
    height: 15px;
    margin-left: 6px;
    border: 1px solid #ddd;
    flex-shrink: 0;
}

.swatch.none {
    background-color: #fff;
    border-color: #bbb;
}

.swatch.none svg {
    display: block;
    width: 100%;
    height: 100%;
}

.stroke-w {
    width: 38px;
    margin-left: 13px;
    font-size: 10px;
}

.mini-drop {
    width: 11px;
    height: 18px;
    margin-left: 4px;
    background-color: #ddd;
    border: 1px solid #777;
    display: flex;
    align-items: center;
    justify-content: center;
}

.field.solid {
    width: 167px;
    height: 20px;
    margin-left: 4px;
    padding: 0 3px 0 2px;
    font-size: 10.500px;
}

.solid-line {
    flex: 1;
    height: 2px;
    margin: 0 11px 0 1px;
    background-color: #222;
}

.custom-btn {
    width: 62px;
    height: 19px;
    margin-left: 10px;
    padding: 0;
    font: inherit;
    font-size: 10.500px;
    color: #555;
    background: linear-gradient(#f6f6f6, #e0e0e0);
    border: 1px solid #777;
    border-radius: 2px;
}

.cap-label {
    margin-left: 7px;
    width: 26px;
    font-size: 10.500px;
    padding-bottom: 4px;
}

.cap-icon {
    width: 20px;
    height: 20px;
    position: relative;
}

.cap-icon svg {
    width: 15px;
    height: 15px;
    display: block;
}

.cap-icon .caret {
    position: absolute;
    right: 1px;
    bottom: 0;
}

.checkbox {
    width: 11px;
    height: 11px;
    margin-left: 13px;
    border: 1px solid #999;
    background-color: #eaeaea;
}

.hint-label {
    width: 62px;
    margin-left: 3px;
    font-size: 10px;
    letter-spacing: -.25px;
    white-space: nowrap;
}

.scale-label {
    width: 30px;
    margin-left: 44px;
    font-size: 10.500px;
}

.field.scale {
    width: 74px;
    height: 20px;
    padding: 0 3px 0 2px;
    justify-content: space-between;
    font-size: 10.500px;
}

.miter-label {
    width: 28px;
    margin-left: 9px;
    font-size: 10.500px;
}

.field.miter {
    width: 36px;
    height: 20px;
    color: #aaa;
    background-color: #eee;
    border: 1px solid #c4c4c4;
    border-radius: 2px;
}

.join-label {
    width: 26px;
    margin-left: 6px;
    font-size: 10.500px;
    padding-bottom: 3px;
}

.help {
    position: absolute;
    top: 3px;
    right: 4px;
    width: 13px;
    height: 13px;
    border: 1px solid #333;
    border-radius: 50%;
    text-align: center;
    font-size: 9px;
    font-weight: bold;
    line-height: 11px;
    color: #333;
}

.props-lower {
    position: absolute;
    right: 3px;
    bottom: 3px;
}

.collapse-tri {
    display: block;
    width: 0;
    height: 0;
    border: 5px solid transparent;
    border-bottom: 5px solid #555;
    border-top: none;
}

.split-v {
    width: 7px;
    flex-shrink: 0;
    display: flex;
    align-items: center;
    background-color: #7f7f7f;
}

.split-handle-v {
    width: 6px;
    height: 45px;
    background-color: #c8c8c8;
    display: flex;
    align-items: center;
    justify-content: center;
}

.split-handle-v::after {
    content: "";
    border: 4px solid transparent;
    border-left: 4px solid #fff;
    border-right: none;
}

/* library side */
.side {
    width: 196px;
    display: flex;
    flex-direction: column;
    background-color: #efefef;
    flex-shrink: 0;
}

.panel-head {
    display: flex;
    align-items: center;
    background-color: #000;
    color: #ddd;
    font-size: 10.500px;
    font-weight: 500;
}

.color-head {
    height: 14px;
    margin-top: 3px;
    box-shadow: 0 -3px 0 #8e8e8e;
}

.lib-head {
    height: 15px;
    margin-top: 5px;
    padding-bottom: 1px;
    box-shadow: 0 -5px 0 #a8a8a8;
}

.tri-right {
    width: 0;
    height: 0;
    margin: 0 4px 0 14px;
    border: 4px solid transparent;
    border-left: 6px solid #fff;
    border-right: none;
}

.tri-down.small-tri {
    margin: 0 1px 0 13px;
}

.lib-menu {
    width: 12px;
    height: 12px;
    margin-left: auto;
    margin-right: 2px;
    color: #ddd;
}

.lib-bar {
    height: 29px;
    display: flex;
    align-items: center;
    padding-left: 4px;
    border-bottom: 1px solid #fff;
}

.lib-combo {
    width: 143px;
    height: 20px;
    padding: 0 6px 0 2px;
    display: flex;
    align-items: center;
    justify-content: space-between;
    background: linear-gradient(#f0f0f0, #dedede);
    border: 1px solid #999;
    border-radius: 3px;
    color: #555;
}

.lib-pin {
    width: 14px;
    height: 14px;
    margin-left: 6px;
}

.lib-new {
    width: 14px;
    height: 14px;
    margin-left: 11px;
}

.lib-count {
    height: 19px;
    padding: 1px 0 0 4px;
    line-height: 15px;
    font-size: 11px;
    color: #555;
    border-bottom: 1px solid #b0b0b0;
}

.lib-preview {
    height: 88px;
    background-color: #c0c0c0;
    border-bottom: 5px solid #f6f6f6;
}

.lib-columns {
    height: 16px;
    display: flex;
    border-bottom: 1px solid #222;
    font-size: 11.500px;
    line-height: 15px;
    color: #555;
}

.col-name {
    width: 141px;
    padding-left: 3px;
    border-right: 1px solid #888;
}

.col-type {
    width: 43px;
    padding-left: 4px;
}

.col-sort {
    width: 0;
    height: 0;
    margin: 4px 0 0 3px;
    border: 4px solid transparent;
    border-bottom: 6px solid #bbb;
    border-top: none;
}

.lib-list {
    height: 448px;
    display: flex;
}

.lib-rows {
    width: 184px;
    background-color: #fff;
}

.lib-scroll {
    width: 12px;
    display: flex;
    flex-direction: column;
    align-items: center;
    padding: 3px 0 7px;
    background-color: #efefef;
}

.view-btn {
    display: block;
    border: 1px solid #333;
    background-color: #fff;
}

.view-btn.wide {
    width: 9px;
    height: 8px;
}

.view-btn.narrow {
    width: 5px;
    height: 8px;
    margin: 6px 0 13px;
}

.lib-thumb {
    width: 11px;
    height: 14px;
    margin-top: 4px;
}

.lib-foot {
    height: 16px;
    display: flex;
    align-items: center;
    padding: 0 0 3px 1px;
}

.lib-foot svg {
    width: 13px;
    height: 13px;
    margin-right: 2px;
}

.lib-foot .lib-trash {
    margin-left: 14px;
}

.lib-hscroll {
    width: 104px;
    height: 14px;
    margin-left: 2px;
    padding: 0 4px;
}

.lib-hthumb {
    width: 25px;
    height: 13px;
    margin-left: 6px;
}

.lib-corner {
    flex: 1;
    align-self: stretch;
    margin-bottom: -3px;
    background-color: #fff;
}
```
